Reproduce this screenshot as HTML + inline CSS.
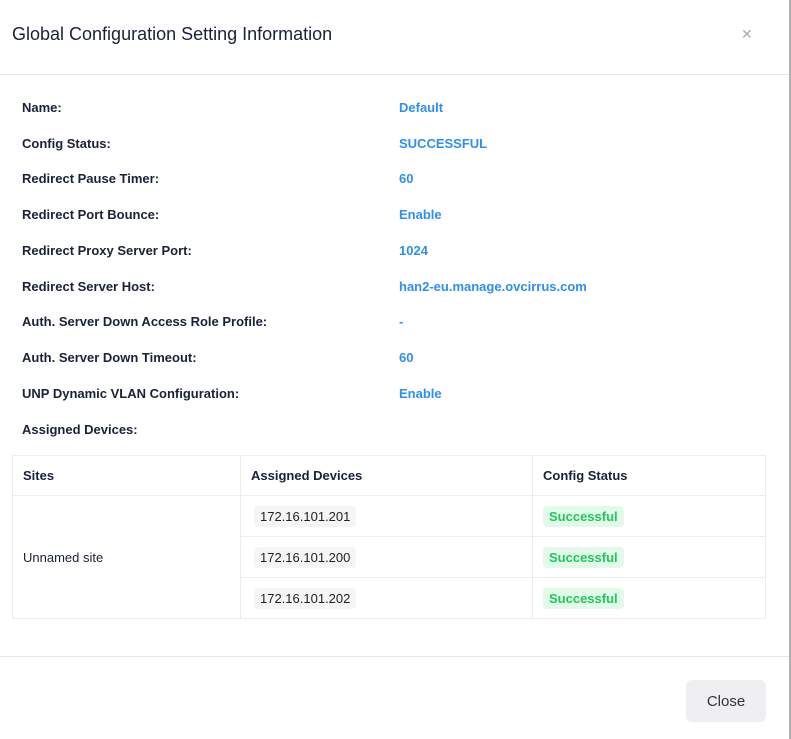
<!DOCTYPE html>
<html><head><style>
body{margin:0;width:791px;height:739px;background:#fff;font-family:"Liberation Sans",sans-serif;position:relative;overflow:hidden;color:#1a2238}
.edge{position:absolute;right:0;top:0;width:2px;height:739px;background:#b0b0b0}
.title{position:absolute;left:12px;top:24px;font-size:18px;color:#1a2238}
.x{position:absolute;left:741px;top:26px;font-size:14px;color:#aab}
.hr{position:absolute;left:0;width:789px;height:1px;background:#e8e8ec}
.l{position:absolute;left:22px;font-size:13px;font-weight:bold;color:#1a2238}
.v{position:absolute;left:399px;font-size:13px;font-weight:bold;color:#2f8ef5}
table{position:absolute;left:12px;top:455px;border-collapse:collapse;font-size:13px}
td,th{border:1px solid #ececef;padding:0 10px;text-align:left}
th{height:39px;font-weight:bold}
td{height:40px}
.ip{display:inline-block;background:#f5f5f6;padding:3px 6px;margin-left:3px;border-radius:4px;color:#222}
.ok{display:inline-block;background:#e2fbe8;color:#22c55e;padding:3px 6px;border-radius:4px;font-weight:bold}
.btn{position:absolute;left:686px;top:680px;width:80px;height:42px;background:#efeff2;border-radius:6px;font-size:15px;color:#333;text-align:center;line-height:44px}
</style></head><body>
<div class="edge"></div>
<div class="title">Global Configuration Setting Information</div>
<div class="x">✕</div>
<div class="hr" style="top:74px"></div>
<div class="l" style="top:100px">Name:</div><div class="v" style="top:100px">Default</div>
<div class="l" style="top:136px">Config Status:</div><div class="v" style="top:136px">SUCCESSFUL</div>
<div class="l" style="top:171px">Redirect Pause Timer:</div><div class="v" style="top:171px">60</div>
<div class="l" style="top:207px">Redirect Port Bounce:</div><div class="v" style="top:207px">Enable</div>
<div class="l" style="top:243px">Redirect Proxy Server Port:</div><div class="v" style="top:243px">1024</div>
<div class="l" style="top:279px">Redirect Server Host:</div><div class="v" style="top:279px">han2-eu.manage.ovcirrus.com</div>
<div class="l" style="top:314px">Auth. Server Down Access Role Profile:</div><div class="v" style="top:314px">-</div>
<div class="l" style="top:350px">Auth. Server Down Timeout:</div><div class="v" style="top:350px">60</div>
<div class="l" style="top:386px">UNP Dynamic VLAN Configuration:</div><div class="v" style="top:386px">Enable</div>
<div class="l" style="top:422px">Assigned Devices:</div>
<table>
<tr><th style="width:207px">Sites</th><th style="width:271px">Assigned Devices</th><th style="width:212px">Config Status</th></tr>
<tr><td rowspan="3" style="color:#1a2238">Unnamed site</td><td><span class="ip">172.16.101.201</span></td><td><span class="ok">Successful</span></td></tr>
<tr><td><span class="ip">172.16.101.200</span></td><td><span class="ok">Successful</span></td></tr>
<tr><td><span class="ip">172.16.101.202</span></td><td><span class="ok">Successful</span></td></tr>
</table>
<div class="hr" style="top:656px"></div>
<div class="btn">Close</div>
</body></html>
